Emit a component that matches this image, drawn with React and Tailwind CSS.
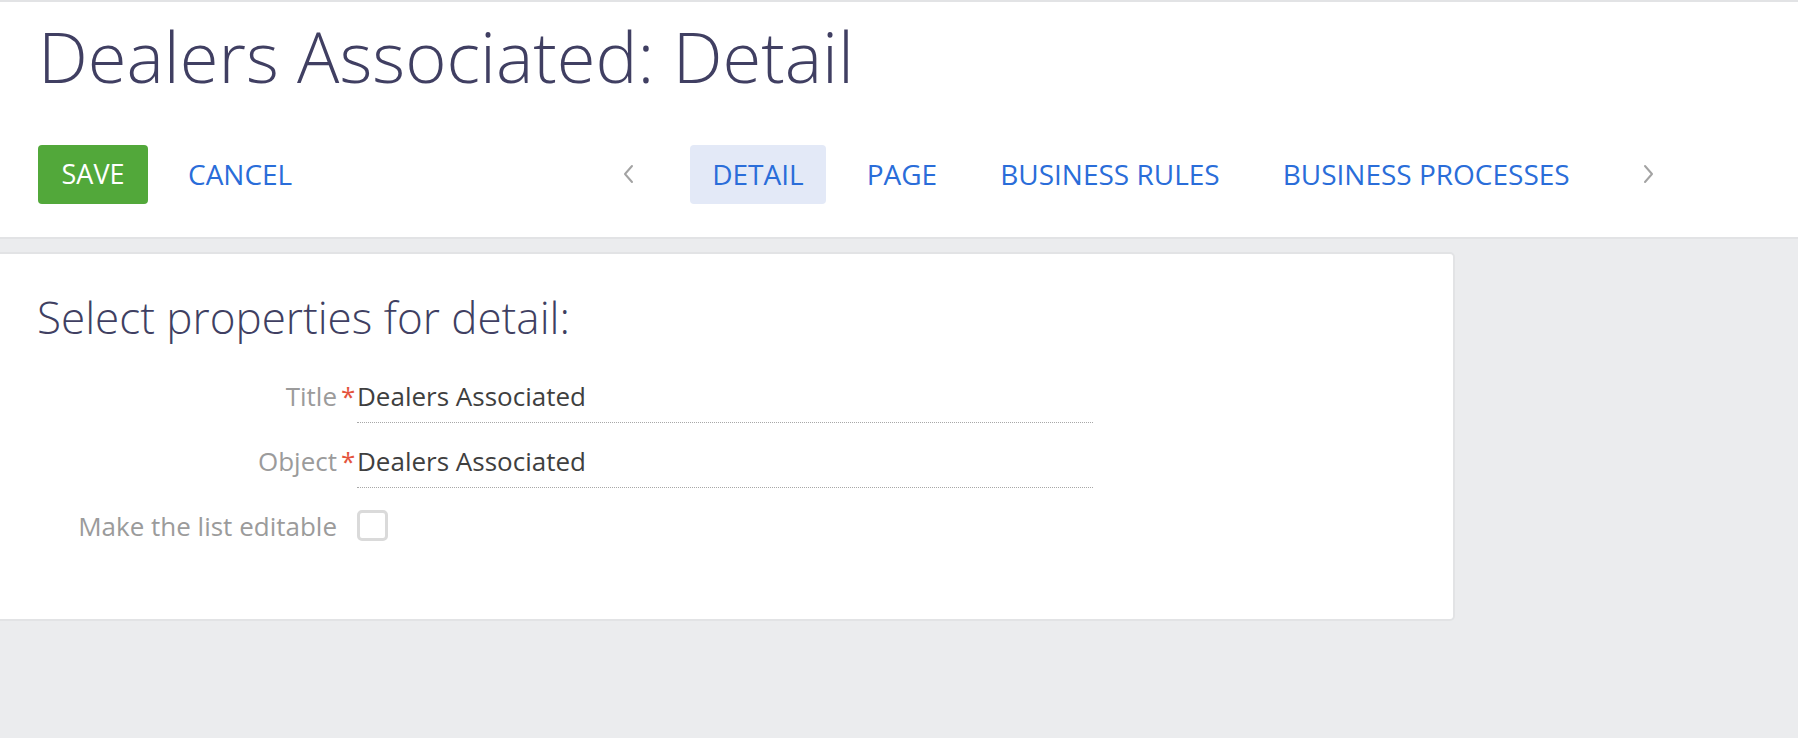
import React, { useState } from 'react';

const ChevronLeft = () => (
  <svg width="12" height="20" viewBox="0 0 12 20" fill="none">
    <polyline points="10,2 3,10 10,18" stroke="#a3a3a3" strokeWidth="2" strokeLinecap="round" strokeLinejoin="round" />
  </svg>
);

const ChevronRight = () => (
  <svg width="12" height="20" viewBox="0 0 12 20" fill="none">
    <polyline points="2,2 9,10 2,18" stroke="#a3a3a3" strokeWidth="2" strokeLinecap="round" strokeLinejoin="round" />
  </svg>
);

const tabs = ['DETAIL', 'PAGE', 'BUSINESS RULES', 'BUSINESS PROCESSES'];

const Field = ({ label, value, required }) => (
  <div className="flex items-start">
    <div className="w-[337px] text-right text-[#9b9b9b] leading-[36px]">{label}</div>
    <div className="w-[20px] pl-[4px] leading-[36px] text-[#e4533d]">{required ? '*' : ''}</div>
    <div className="w-[736px] border-b border-dotted border-[#a8a8a8] pb-[8px] leading-[36px] text-[#3f3f3f]">
      {value}
    </div>
  </div>
);

export default function App() {
  const [active, setActive] = useState('DETAIL');
  const [editable, setEditable] = useState(false);

  return (
    <div className="min-h-[738px] bg-[#ebecee] font-['Open_Sans',sans-serif]">
      {/* header */}
      <div className="border-t-2 border-b-2 border-[#e2e3e5] bg-white pl-[38px] pt-[19px] pb-[33px]">
        <h1 className="text-[70.5px] font-light leading-none text-[#403f62]">
          Dealers Associated: Detail
        </h1>
        <div className="mt-[53px] flex items-center">
          <button className="flex h-[59px] w-[110px] items-center justify-center rounded-[4px] bg-[#52a83a] text-[27px] text-white">
            SAVE
          </button>
          <button className="ml-[16px] h-[59px] px-[24px] text-[28px] text-[#2a6dd9]">CANCEL</button>
          <nav className="ml-[306px] flex items-center text-[28px]">
            <button className="mr-[56px] flex items-center">
              <ChevronLeft />
            </button>
            <div className="flex items-center gap-[19px]">
              {tabs.map((t) => (
                <button
                  key={t}
                  onClick={() => setActive(t)}
                  className={
                    'h-[59px] rounded-[4px] px-[22px] text-[#2a6dd9] ' +
                    (active === t ? 'bg-[#e3e9f7]' : 'bg-transparent')
                  }
                >
                  {t}
                </button>
              ))}
            </div>
            <button className="ml-[51px] flex items-center">
              <ChevronRight />
            </button>
          </nav>
        </div>
      </div>

      {/* detail settings card */}
      <div className="mt-[13px] w-[1455px] rounded-r-[5px] border-y-2 border-r-2 border-[#e2e3e5] bg-white pt-[41px] pb-[75px]">
        <h2 className="pl-[37px] text-[44px] font-light leading-none text-[#403f62]">
          Select properties for detail:
        </h2>
        <div className="mt-[39px] text-[26px]">
          <Field label="Title" value="Dealers Associated" required />
          <div className="mt-[20px]">
            <Field label="Object" value="Dealers Associated" required />
          </div>
          <div className="mt-[20px] flex items-center">
            <div className="w-[337px] text-right leading-[36px] text-[#9b9b9b]">Make the list editable</div>
            <button
              onClick={() => setEditable(!editable)}
              className="ml-[20px] h-[31px] w-[31px] rounded-[5px] border-[3px] border-[#dadada] bg-white"
            >
              {editable ? <span className="block h-full w-full bg-[#52a83a]" /> : null}
            </button>
          </div>
        </div>
      </div>
    </div>
  );
}
